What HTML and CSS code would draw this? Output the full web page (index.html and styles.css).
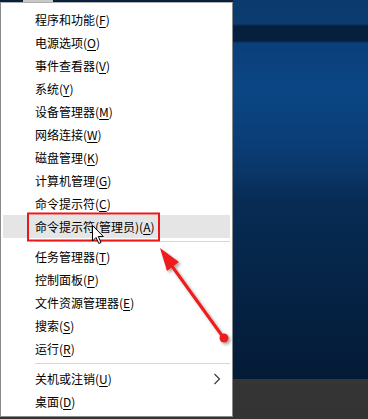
FILE: index.html
```html
<!DOCTYPE html>
<html lang="zh-CN">
<head>
<meta charset="utf-8">
<title>Win+X 菜单</title>
<link rel="stylesheet" href="styles.css">
</head>
<body>
  <div class="topstrip"><span class="tab"></span></div>
  <nav class="menu">
    <div class="item">程序和功能(<u>F</u>)</div>
    <div class="item">电源选项(<u>O</u>)</div>
    <div class="item">事件查看器(<u>V</u>)</div>
    <div class="item">系统(<u>Y</u>)</div>
    <div class="item">设备管理器(<u>M</u>)</div>
    <div class="item">网络连接(<u>W</u>)</div>
    <div class="item">磁盘管理(<u>K</u>)</div>
    <div class="item">计算机管理(<u>G</u>)</div>
    <div class="item">命令提示符(<u>C</u>)</div>
    <div class="item active">命令提示符(管理员)(<u>A</u>)</div>
    <div class="sep"></div>
    <div class="item">任务管理器(<u>T</u>)</div>
    <div class="item">控制面板(<u>P</u>)</div>
    <div class="item">文件资源管理器(<u>E</u>)</div>
    <div class="item">搜索(<u>S</u>)</div>
    <div class="item">运行(<u>R</u>)</div>
    <div class="sep"></div>
    <div class="item sub">关机或注销(<u>U</u>)
      <svg class="chev" width="8" height="12" viewBox="0 0 8 12"><path d="M1.5 1 L6.5 6 L1.5 11" fill="none" stroke="#333" stroke-width="1.1"/></svg>
    </div>
    <div class="item">桌面(<u>D</u>)</div>
  </nav>

  <svg class="annot" width="368" height="419" viewBox="0 0 368 419">
    <defs>
      <filter id="sh" x="-20%" y="-20%" width="140%" height="140%">
        <feDropShadow dx="2" dy="2" stdDeviation="1.5" flood-color="#000" flood-opacity="0.35"/>
      </filter>
    </defs>
    <rect x="28" y="213.5" width="131" height="27" fill="none" stroke="#e8191b" stroke-width="2"/>
    <g filter="url(#sh)">
      <line x1="223" y1="337" x2="169" y2="262" stroke="#ee1c1c" stroke-width="3" stroke-linecap="round"/>
      <polygon points="160,248 179,262 167,271" fill="#ee1c1c"/>
      <circle cx="224" cy="338" r="4.5" fill="#ee1c1c"/>
    </g>
    <path d="M92.5 225.5 L92.5 241 L96 237.5 L98.8 243.5 L101 242.5 L98.3 236.5 L103.3 236.5 Z" fill="#fff" stroke="#000" stroke-width="1" stroke-linejoin="miter"/>
  </svg>
</body>
</html>
```

FILE: styles.css
```css
html, body {
  margin: 0;
  padding: 0;
}

body {
  width: 368px;
  height: 419px;
  overflow: hidden;
  position: relative;
  font-family: "Noto Sans CJK SC", "Noto Sans", sans-serif;
  font-size: 12px;
  color: #000;
  background:
    linear-gradient(to bottom,
      transparent 0, transparent 379px,
      #353535 379px, #333 419px),
    linear-gradient(to bottom,
      #0b3a6f 0, #0c3b70 24px,
      #061f3d 26px, #061f3d 41px,
      #0b3f7a 43px, #0b4685 90px,
      #0a3c74 150px, #0a3566 175px,
      #072c55 200px, #052243 300px, #041b36 379px);
}

.topstrip {
  height: 2px;
  width: 233px;
  background: #08203c;
}

.tab {
  display: block;
  margin-left: 23px;
  width: 30px;
  height: 2px;
  background: #c8c8c8;
}

.menu {
  width: 227px;
  background: #fff;
  border: 1px solid #8a8a8a;
  border-top-color: #b0b0b0;
  padding: 5px 2px 3px 2px;
  display: flex;
  flex-direction: column;
}

.item {
  height: 23px;
  line-height: 23px;
  padding-left: 32px;
  white-space: nowrap;
  display: flex;
  align-items: center;
  position: relative;
}

.item u {
  text-decoration: underline;
  text-underline-offset: 2px;
  text-decoration-thickness: 1px;
}

.item.active {
  background: #e5e5e5;
}

.item.sub .chev {
  position: absolute;
  right: 9px;
  top: 6px;
}

.sep {
  height: 7px;
  display: flex;
  align-items: center;
  padding-left: 32px;
}

.sep::after {
  content: "";
  display: block;
  flex: 1;
  height: 1px;
  background: #d7d7d7;
}

.annot {
  position: absolute;
  left: 0;
  top: 0;
  pointer-events: none;
}
```
